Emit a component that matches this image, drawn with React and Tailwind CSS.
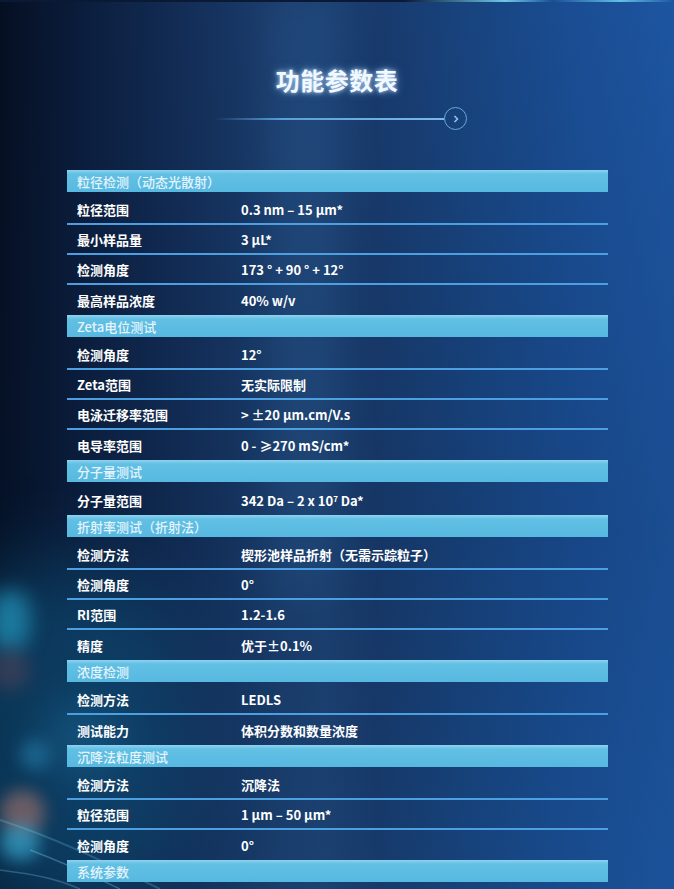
import React from "react";

const sections = [
  {
    title: "粒径检测（动态光散射）",
    rows: [
      ["粒径范围", "0.3 nm – 15 µm*"],
      ["最小样品量", "3 µL*"],
      ["检测角度", "173 ° + 90 ° + 12°"],
      ["最高样品浓度", "40% w/v"],
    ],
  },
  {
    title: "Zeta电位测试",
    rows: [
      ["检测角度", "12°"],
      ["Zeta范围", "无实际限制"],
      ["电泳迁移率范围", "> ±20 µm.cm/V.s"],
      ["电导率范围", "0 - ≥270 mS/cm*"],
    ],
  },
  {
    title: "分子量测试",
    rows: [["分子量范围", "MW"]],
  },
  {
    title: "折射率测试（折射法）",
    rows: [
      ["检测方法", "楔形池样品折射（无需示踪粒子）"],
      ["检测角度", "0°"],
      ["RI范围", "1.2-1.6"],
      ["精度", "优于±0.1%"],
    ],
  },
  {
    title: "浓度检测",
    rows: [
      ["检测方法", "LEDLS"],
      ["测试能力", "体积分数和数量浓度"],
    ],
  },
  {
    title: "沉降法粒度测试",
    rows: [
      ["检测方法", "沉降法"],
      ["粒径范围", "1 µm – 50 µm*"],
      ["检测角度", "0°"],
    ],
  },
];

function Value({ v }) {
  if (v === "MW") {
    return (
      <span>
        342 Da – 2 x 10<sup className="text-[8px]">7</sup> Da*
      </span>
    );
  }
  return <span>{v}</span>;
}

function Header({ title }) {
  return (
    <div className="h-[22px] flex items-center pl-[10px] bg-[linear-gradient(180deg,#8fd3f0_0%,#62c0e4_18%,#57b8e0_100%)] text-[13px] font-medium text-[#e4f4fc] leading-none">
      {title}
    </div>
  );
}

function Row({ label, value, last }) {
  return (
    <div
      className={
        "h-[30px] flex items-center text-[13px] font-bold text-white leading-none " +
        (last ? "" : "border-b-2 border-[#4c9fe0]")
      }
    >
      <div className="w-[174px] pl-[10px]">{label}</div>
      <div>
        <Value v={value} />
      </div>
    </div>
  );
}

export default function App() {
  return (
    <div
      className="relative w-[674px] h-[889px] overflow-hidden bg-[linear-gradient(90deg,#050f22_0%,#0b1d3c_12%,#132e58_28%,#1b3e6e_42%,#1d4273_48%,#183a6c_56%,#18447f_70%,#1a4d93_85%,#1d55a0_100%)]"
      style={{ fontFamily: '"Noto Sans CJK SC", "Noto Sans", sans-serif' }}
    >
      {/* decorative background glow */}
      <div className="absolute inset-0 bg-[linear-gradient(180deg,rgba(0,0,0,0)_0%,rgba(8,30,60,0.15)_60%,rgba(10,60,100,0.1)_100%)]" />
      <div className="absolute left-[270px] top-0 w-[60px] h-[600px] bg-[#2a5a90] opacity-30 blur-[20px]" />
      <div className="absolute -left-[80px] top-[560px] w-[260px] h-[360px] rounded-full bg-[#0f5a86] opacity-50 blur-[40px]" />
      <div className="absolute -left-[10px] top-[590px] w-[40px] h-[60px] rounded-full bg-[#27a8d0] opacity-60 blur-[10px]" />
      <div className="absolute -left-[10px] top-[650px] w-[40px] h-[40px] rounded-full bg-[#7a4a5a] opacity-40 blur-[10px]" />
      <div className="absolute left-[0px] top-[790px] w-[45px] h-[45px] rounded-full bg-[#c88070] opacity-50 blur-[8px]" />
      <div className="absolute left-[0px] top-[825px] w-[40px] h-[35px] rounded-full bg-[#40b8e0] opacity-60 blur-[8px]" />
      <div className="absolute left-[20px] top-[740px] w-[30px] h-[30px] rounded-full bg-[#2a8ab8] opacity-50 blur-[8px]" />
      <div className="absolute left-[40px] top-[700px] w-[80px] h-[80px] rounded-full bg-[#1e6d9a] opacity-40 blur-[20px]" />
      <div className="absolute left-[0px] top-0 w-[674px] h-[2px] bg-[linear-gradient(90deg,#0a1a35_0%,#0a1a35_60%,#6fc7e8_75%,#1a4e96_82%,#60c0e6_92%,#1d55a0_100%)]" />
      <svg className="absolute left-0 top-[780px]" width="200" height="109" viewBox="0 0 200 109">
        <path d="M0 40 C60 60 100 80 160 109" stroke="#6fd0f0" strokeOpacity="0.25" strokeWidth="2" fill="none" />
        <path d="M30 70 C70 85 90 95 120 109" stroke="#8fe0ff" strokeOpacity="0.3" strokeWidth="1.5" fill="none" />
        <path d="M0 90 C40 95 60 100 80 109" stroke="#8fe0ff" strokeOpacity="0.25" strokeWidth="1.5" fill="none" />
      </svg>

      <div className="relative flex flex-col items-center">
        <h1 className="mt-[64px] text-[24px] leading-[32px] font-bold text-[#f2f8ff] tracking-[0.5px] [text-shadow:0_0_4px_rgba(200,230,255,0.9),0_0_10px_rgba(150,200,255,0.6)]">
          功能参数表
        </h1>
        <div className="mt-[11px] flex items-center ml-[8px]">
          <div className="w-[229px] h-[2px] bg-[linear-gradient(90deg,rgba(90,160,220,0)_0%,#5aa0dc_30%,#7ab8ea_100%)]" />
          <div className="w-[23px] h-[23px] rounded-full border border-[#6aa8da] flex items-center justify-center">
            <svg width="8" height="10" viewBox="0 0 8 10">
              <path d="M2.5 2 L5.5 5 L2.5 8" stroke="#8fc3ec" strokeWidth="1.6" fill="none" />
            </svg>
          </div>
        </div>
      </div>

      <div className="relative ml-[67px] mt-[40px] w-[541px] flex flex-col">
        {sections.map((s, si) => (
          <div key={si} className="flex flex-col">
            <Header title={s.title} />
            <div className="mt-[3px] flex flex-col">
              {s.rows.map((r, ri) => (
                <Row key={ri} label={r[0]} value={r[1]} last={ri === s.rows.length - 1} />
              ))}
            </div>
          </div>
        ))}
        <Header title="系统参数" />
      </div>
    </div>
  );
}
